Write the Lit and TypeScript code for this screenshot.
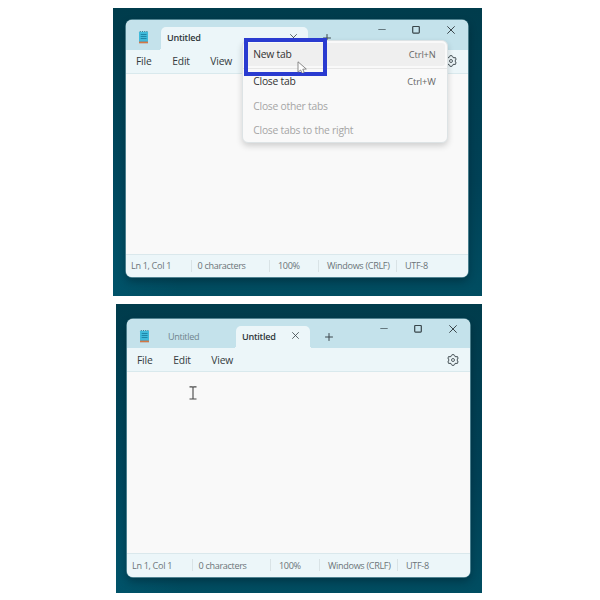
import { LitElement, html, css, svg, nothing } from "lit";
import { customElement, property } from "lit/decorators.js";

const stroke = "#3c474c";

const notepadIcon = html`<svg width="11" height="14" viewBox="0 0 11 14">
  <rect x="1" y="11" width="9" height="2.2" rx=".5" fill="#a87565" />
  <rect x="1" y="1.8" width="9" height="9.8" rx=".6" fill="#3fbada" />
  <path d="M1.8 1.5h1M4 1.5h1M6.2 1.5h1M8.4 1.5h1" stroke="#3a7f93" stroke-width="1.2" />
  <path d="M2.7 4.5h5.8M2.7 6.5h5.8M2.7 8.5h5.8" stroke="#17799a" stroke-width=".8" />
  <path d="M1 12.6h9" stroke="#d9793f" stroke-width="1" />
</svg>`;

const cross = (size: number, width = 1) => html`<svg width=${size} height=${size} viewBox="0 0 8 8">
  <path d="M.6 .6 7.4 7.4M7.4 .6 .6 7.4" fill="none" stroke=${stroke} stroke-width=${width} stroke-linecap="round" />
</svg>`;

const plus = html`<svg width="8" height="8" viewBox="0 0 8 8">
  <path d="M4 .5v7M.5 4h7" stroke=${stroke} stroke-width="1" stroke-linecap="round" />
</svg>`;

const dash = html`<svg width="8" height="8" viewBox="0 0 8 8">
  <path d="M.3 3.5h7.4" stroke="#65787f" stroke-width="1" />
</svg>`;

const square = html`<svg width="8" height="8" viewBox="0 0 8 8">
  <rect x=".7" y=".5" width="6.6" height="6.6" rx=".8" fill="none" stroke="#38454a" stroke-width="1.2" />
</svg>`;

const teeth = [0, 60, 120, 180, 240, 300].map(
  (a) => svg`<path transform="rotate(${a} 6 6)" d="M3.6 2.3 4.6 1.9 4.95 .7Q6 .4 7.05 .7L7.4 1.9 8.4 2.3" />`,
);
const gear = html`<svg width="12" height="12" viewBox="0 0 12 12" fill="none" stroke="#566166" stroke-width="1" stroke-linejoin="round">
  ${teeth}
  <circle cx="6" cy="6" r="1.5" />
</svg>`;

const arrow = html`<svg width="11" height="14" viewBox="0 0 11 14">
  <path d="M1 .8V11.2L3.6 9 5.2 12.4 7.2 11.5 5.8 8.2 9.3 8Z" fill="#fdfdfd" stroke="#707070" stroke-width=".8" stroke-linejoin="round" />
</svg>`;

const beam = html`<svg width="8" height="14" viewBox="0 0 8 14">
  <path d="M.5 .9h2.7L4 1.5 4.8 .9h2.7M4 1.5v11M.5 13h2.7L4 12.4 4.8 13h2.7" fill="none" stroke="#484848" stroke-width="1.1" />
</svg>`;

interface Tab {
  title: string;
  active: boolean;
}

@customElement("notepad-menu")
class NotepadMenu extends LitElement {
  static styles = css`
    :host {
      display: block;
      box-sizing: border-box;
      width: 206px;
      height: 103px;
      padding: 1.5px 2px 0;
      border: 1px solid #dde3e5;
      border-radius: 6px;
      background: #f9f9f9;
      box-shadow: 0 3px 6px rgba(0, 0, 0, 0.17);
      color: #333;
      font-size: 10.3px;
      letter-spacing: -0.23px;
    }
    .item {
      display: flex;
      align-items: center;
      justify-content: space-between;
      box-sizing: border-box;
      height: 24.2px;
      padding: 0 9px 0 8.7px;
      border-radius: 3px;
      white-space: nowrap;
    }
    .hover {
      height: 23px;
      margin-bottom: 2px;
      background: #efefef;
    }
    .line {
      height: 1px;
      margin: 0 -2px 0.8px;
      background: #e6e6e6;
    }
    .off {
      color: #a5a5a5;
    }
    .key {
      color: #666;
      font-size: 9.3px;
      letter-spacing: -0.15px;
    }
  `;
  render() {
    return html`
      <div class="item hover"><span>New tab</span><span class="key">Ctrl+N</span></div>
      <div class="line"></div>
      <div class="item"><span>Close tab</span><span class="key">Ctrl+W</span></div>
      <div class="item off"><span>Close other tabs</span></div>
      <div class="item off"><span>Close tabs to the right</span></div>
    `;
  }
}

@customElement("notepad-window")
class NotepadWindow extends LitElement {
  @property({ attribute: false }) tabs: Tab[] = [];

  static styles = css`
    :host {
      display: flex;
      flex-direction: column;
      box-sizing: border-box;
      border-radius: 6px;
      overflow: hidden;
      background: #f9f9f9;
      color: #343b3e;
      font-size: 10.3px;
      white-space: nowrap;
      box-shadow: 0 0 0 0.7px #6b9ca9, 0 4px 9px rgba(0, 20, 30, 0.4);
    }
    svg {
      display: block;
      flex: none;
    }
    .title {
      display: flex;
      height: 29.5px;
      flex: none;
      background: #c4e2eb;
    }
    .app {
      width: 35px;
      flex: none;
      box-sizing: border-box;
      padding: 10.3px 0 0 12.3px;
    }
    .tab {
      display: flex;
      align-items: center;
      justify-content: space-between;
      box-sizing: border-box;
      width: var(--tab, 147px);
      height: 22.5px;
      margin-top: 7px;
      padding: 0 11.5px 1px 6px;
      border-radius: 5px 5px 0 0;
      font-size: 9.1px;
      letter-spacing: -0.27px;
      position: relative;
    }
    .active {
      background: #ecf6f9;
      color: #30383b;
      font-weight: 600;
    }
    .tab svg {
      margin-top: -1px;
    }
    .active::before,
    .active::after {
      content: "";
      position: absolute;
      bottom: 0;
      width: 3px;
      height: 3px;
    }
    .active::before {
      left: -3px;
      background: radial-gradient(circle at 0 0, transparent 3px, #ecf6f9 3.3px);
    }
    .active::after {
      right: -3px;
      background: radial-gradient(circle at 100% 0, transparent 3px, #ecf6f9 3.3px);
    }
    .idle {
      color: #71858d;
      letter-spacing: -0.35px;
    }
    .add {
      padding: 14px 0 0 14.5px;
      flex: 1;
    }
    .controls {
      display: flex;
      gap: 26.3px;
      padding: 6px 13px 0 0;
    }
    .menu {
      display: flex;
      align-items: center;
      height: 23px;
      flex: none;
      padding: 0 10.5px 0 10px;
      background: #ecf6f9;
      border-bottom: 1px solid #d9e9ed;
      letter-spacing: -0.2px;
    }
    .menu span {
      width: 36.3px;
    }
    .menu span + span {
      width: 38px;
    }
    .gear {
      margin-left: auto;
    }
    .page {
      flex: 1;
    }
    .status {
      display: grid;
      grid-template-columns: 64.5px 78.5px 49px 78px 1fr;
      align-items: center;
      height: 22.5px;
      flex: none;
      border-top: 1px solid #dae8ec;
      background: #ecf6f9;
      color: #6b7478;
      font-size: 9.1px;
      letter-spacing: -0.33px;
    }
    .cell {
      display: flex;
      align-items: center;
      height: 12px;
      box-sizing: border-box;
      padding-left: 6px;
      border-left: 1px solid #d9e3e6;
    }
    .cell:first-child {
      padding-left: 5px;
      border: 0;
    }
    .cell:nth-child(n + 3) {
      padding-left: 8px;
    }
  `;
  render() {
    return html`
      <div class="title">
        <div class="app">${notepadIcon}</div>
        ${this.tabs.map(
          (t) => html`<div class="tab ${t.active ? "active" : "idle"}">
            <span>${t.title}</span>${t.active ? cross(7, 0.95) : nothing}
          </div>`,
        )}
        <div class="add">${plus}</div>
        <div class="controls">${dash}${square}${cross(8)}</div>
      </div>
      <div class="menu"><span>File</span><span>Edit</span><span>View</span><div class="gear">${gear}</div></div>
      <div class="page"></div>
      <div class="status">
        ${["Ln 1, Col 1", "0 characters", "100%", "Windows (CRLF)", "UTF-8"].map(
          (s) => html`<div class="cell">${s}</div>`,
        )}
      </div>
    `;
  }
}

@customElement("app-root")
class AppRoot extends LitElement {
  static styles = css`
    :host {
      display: flex;
      flex-direction: column;
      gap: 8px;
      box-sizing: border-box;
      width: 600px;
      height: 600px;
      padding: 8px 118px 0 113px;
      overflow: hidden;
      background: #fff;
      font-family: "Open Sans", "Noto Sans", sans-serif;
    }
    .desktop {
      position: relative;
      box-sizing: border-box;
      height: 288px;
      padding: 12px 14.5px 19px 13px;
      background: radial-gradient(ellipse 65px 230px at 0 90%, #00597280, transparent),
        linear-gradient(#003c4c, #004156 60%, #004d61);
    }
    .second {
      height: 289px;
      margin-left: 3px;
      padding: 14.5px 12.5px 16.5px 11px;
    }
    notepad-window {
      height: 100%;
    }
    .second notepad-window {
      --tab: 74px;
    }
    notepad-menu {
      position: absolute;
      left: 128.6px;
      top: 32px;
    }
    .mark {
      position: absolute;
      left: 131px;
      top: 30px;
      width: 83px;
      height: 38px;
      box-sizing: border-box;
      border: 4px solid #2a3bd0;
    }
    .pointer {
      position: absolute;
      left: 184px;
      top: 52.5px;
      height: 12px;
      overflow: hidden;
    }
    .beam {
      position: absolute;
      left: 72.5px;
      top: 82px;
    }
    .pointer svg,
    .beam svg {
      display: block;
    }
  `;
  render() {
    return html`
      <div class="desktop">
        <notepad-window .tabs=${[{ title: "Untitled", active: true }]}></notepad-window>
        <notepad-menu></notepad-menu>
        <div class="mark"></div>
        <div class="pointer">${arrow}</div>
      </div>
      <div class="desktop second">
        <notepad-window
          .tabs=${[
            { title: "Untitled", active: false },
            { title: "Untitled", active: true },
          ]}
        ></notepad-window>
        <div class="beam">${beam}</div>
      </div>
    `;
  }
}
